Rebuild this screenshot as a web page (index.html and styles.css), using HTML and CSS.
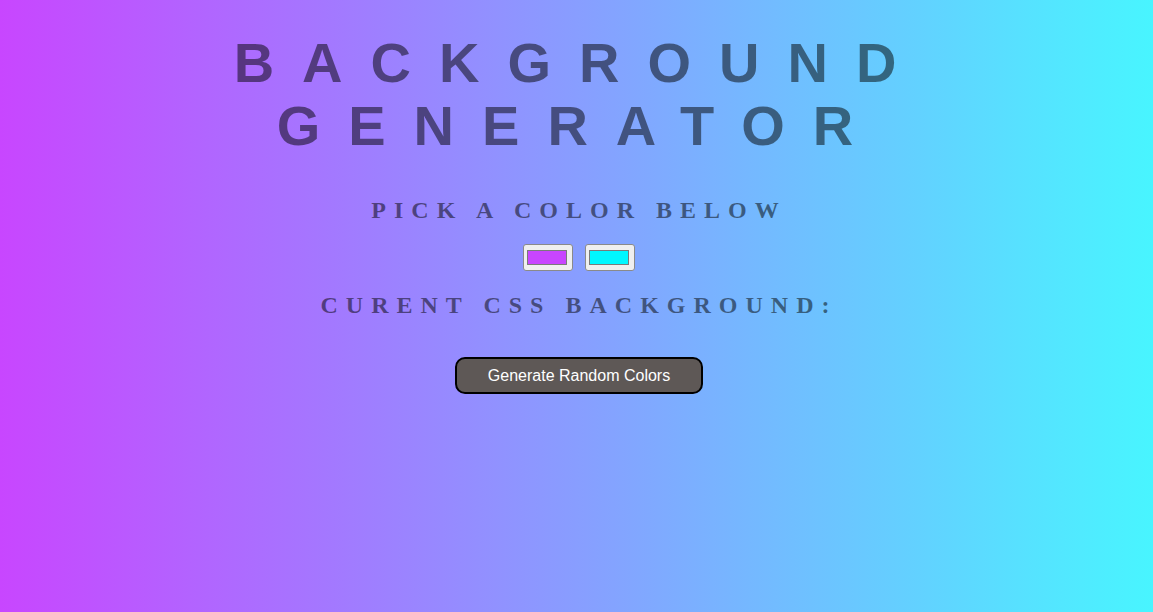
FILE: index.html
```html
<!DOCTYPE html>
<html lang="en">
<head>
<meta charset="utf-8">
<title>Background Generator</title>
<link rel="stylesheet" href="styles.css">
</head>
<body>
  <main class="page">
    <h1 class="title">Background Generator</h1>
    <h2 class="label">Pick a color below</h2>
    <div class="pickers">
      <input class="picker" type="color" name="color1" value="#c845ff">
      <input class="picker" type="color" name="color2" value="#00f7ff">
    </div>
    <h2 class="label label-current">Curent CSS background:</h2>
    <div class="actions">
      <button class="random-btn" type="button">Generate Random Colors</button>
    </div>
  </main>
</body>
</html>
```
FILE: styles.css
```css
html {
  height: 100%;
}

body {
  margin: 0;
  min-height: 100%;
  background: linear-gradient(to right, #c846ff, #48f5ff);
  color: rgba(0, 0, 0, 0.5);
  font-family: "Liberation Serif", "Times New Roman", serif;
  letter-spacing: 8px;
  text-transform: uppercase;
  text-align: center;
}

.page {
  padding: 31px 8px 0 13px;
}

.title {
  margin: 0 0 39px;
  font-family: "Liberation Sans", Arial, sans-serif;
  font-weight: 700;
  font-size: 56px;
  line-height: 63px;
  letter-spacing: 28px;
  color: rgba(0, 0, 0, 0.5);
}

.label {
  margin: 0 0 20px;
  font-family: "Liberation Serif", "Times New Roman", serif;
  font-weight: 700;
  font-size: 24px;
  line-height: 28px;
  letter-spacing: 8px;
}

.label-current {
  margin-bottom: 38px;
}

.pickers {
  display: flex;
  justify-content: center;
  gap: 12px;
  margin-bottom: 20px;
}

.picker {
  -webkit-appearance: none;
  appearance: none;
  box-sizing: border-box;
  width: 50px;
  height: 27px;
  margin: 0;
  padding: 5px 5px 5px 3px;
  border: 1px solid #8a8a8a;
  border-radius: 3px;
  background: #efefef;
  cursor: pointer;
}

.picker::-webkit-color-swatch-wrapper {
  padding: 0;
}

.picker::-webkit-color-swatch {
  border: 1px solid #7a7a7a;
  border-radius: 0;
}

.actions {
  display: flex;
  justify-content: center;
}

.random-btn {
  box-sizing: border-box;
  width: 248px;
  height: 37px;
  margin: 0;
  padding: 0;
  border: 2px solid #000;
  border-radius: 10px;
  background: #5e5856;
  color: #fff;
  font-family: "Liberation Sans", Arial, sans-serif;
  font-size: 16px;
  letter-spacing: normal;
  text-transform: none;
  cursor: pointer;
}
```
